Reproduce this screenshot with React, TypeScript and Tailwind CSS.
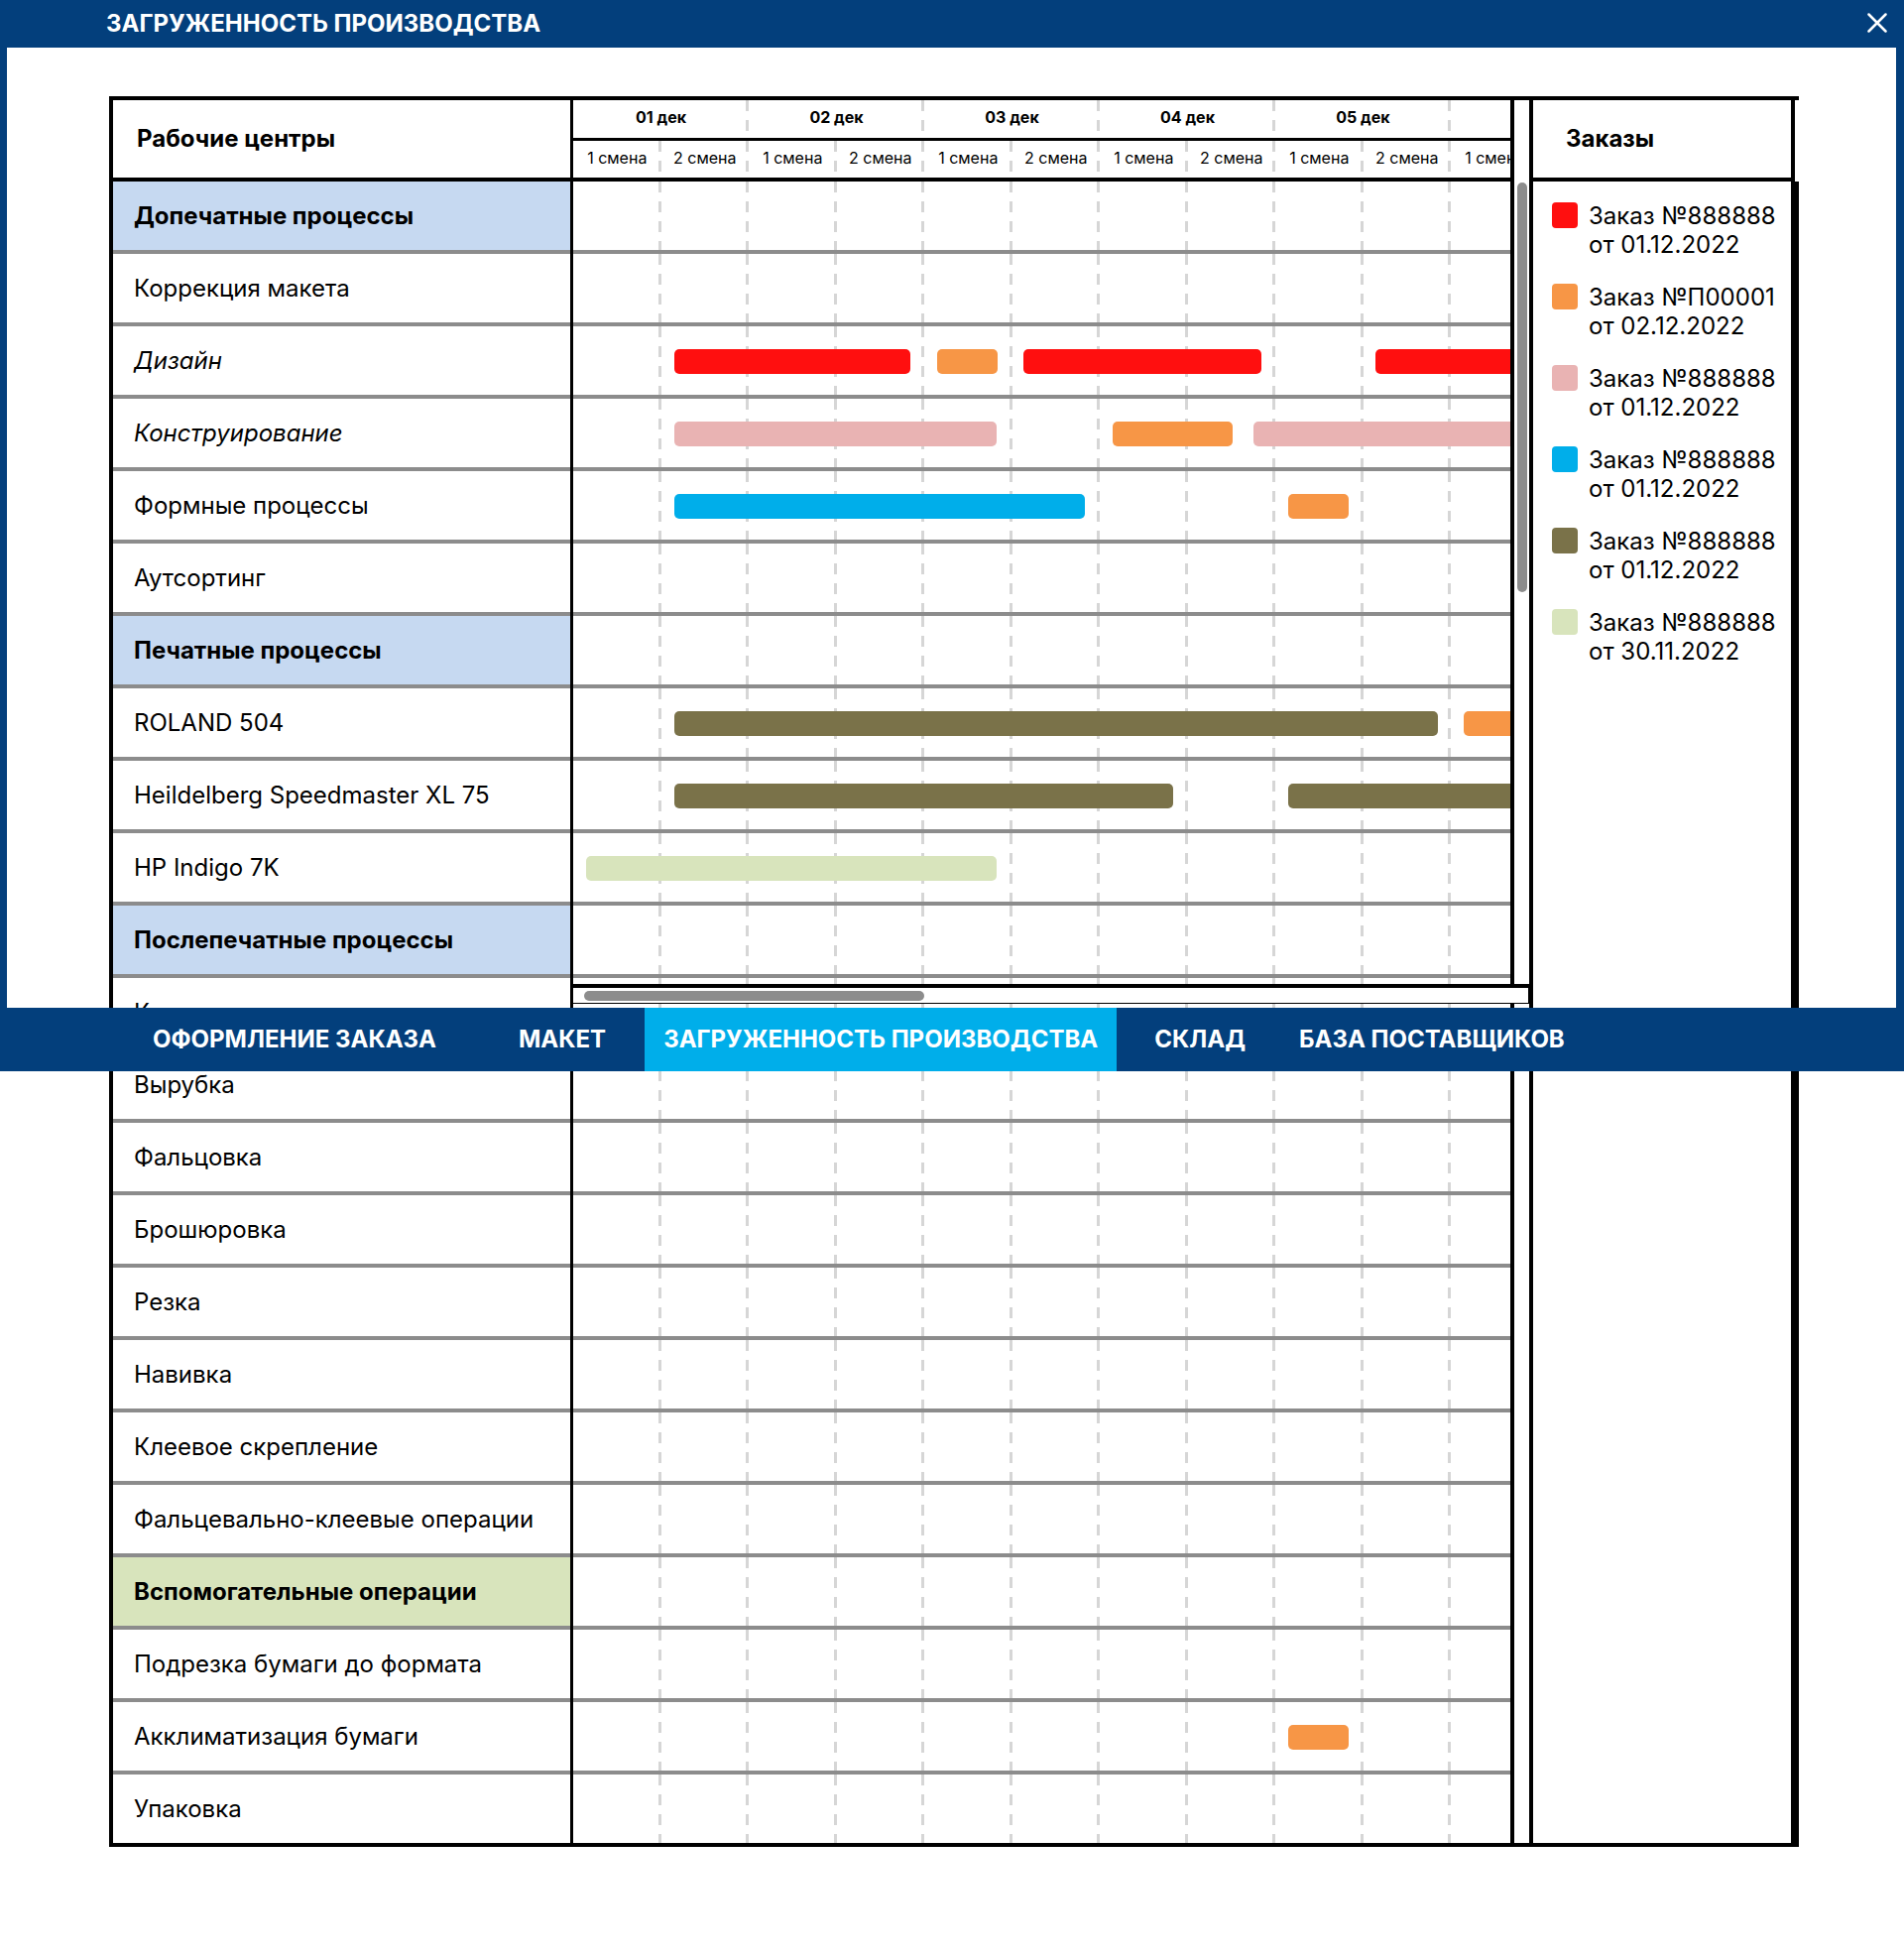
import React from 'react';

type Bar = { x: number; w: number; color: string };
type Row = { name: string; group?: 'blue' | 'green'; italic?: boolean; bars?: Bar[] };

const RED = 'bg-[#ff0f0f]';
const ORANGE = 'bg-[#f79646]';
const PINK = 'bg-[#e9b3b3]';
const BLUE = 'bg-[#00aeea]';
const OLIVE = 'bg-[#7a7249]';
const LIME = 'bg-[#d8e4bc]';

const rows: Row[] = [
  { name: 'Допечатные процессы', group: 'blue' },
  { name: 'Коррекция макета' },
  {
    name: 'Дизайн',
    italic: true,
    bars: [
      { x: 102, w: 238, color: RED },
      { x: 367, w: 61, color: ORANGE },
      { x: 454, w: 240, color: RED },
      { x: 809, w: 220, color: RED },
    ],
  },
  {
    name: 'Конструирование',
    italic: true,
    bars: [
      { x: 102, w: 325, color: PINK },
      { x: 544, w: 121, color: ORANGE },
      { x: 686, w: 320, color: PINK },
    ],
  },
  {
    name: 'Формные процессы',
    bars: [
      { x: 102, w: 414, color: BLUE },
      { x: 721, w: 61, color: ORANGE },
    ],
  },
  { name: 'Аутсортинг' },
  { name: 'Печатные процессы', group: 'blue' },
  {
    name: 'ROLAND 504',
    bars: [
      { x: 102, w: 770, color: OLIVE },
      { x: 898, w: 120, color: ORANGE },
    ],
  },
  {
    name: 'Heildelberg Speedmaster XL 75',
    bars: [
      { x: 102, w: 503, color: OLIVE },
      { x: 721, w: 300, color: OLIVE },
    ],
  },
  { name: 'HP Indigo 7K', bars: [{ x: 13, w: 414, color: LIME }] },
  { name: 'Послепечатные процессы', group: 'blue' },
  { name: 'Кашировка' },
  { name: 'Вырубка' },
  { name: 'Фальцовка' },
  { name: 'Брошюровка' },
  { name: 'Резка' },
  { name: 'Навивка' },
  { name: 'Клеевое скрепление' },
  { name: 'Фальцевально-клеевые операции' },
  { name: 'Вспомогательные операции', group: 'green' },
  { name: 'Подрезка бумаги до формата' },
  { name: 'Акклиматизация бумаги', bars: [{ x: 721, w: 61, color: ORANGE }] },
  { name: 'Упаковка' },
];

// the sixth day only starts inside the visible area, so it has no label
const days = ['01 дек', '02 дек', '03 дек', '04 дек', '05 дек', ''];
const shifts = Array.from({ length: 11 }, (_, i) => (i % 2 === 0 ? '1 смена' : '2 смена'));

const orders = [
  { color: 'bg-[#ff0f0f]', no: '№888888', date: '01.12.2022' },
  { color: 'bg-[#f79646]', no: '№П00001', date: '02.12.2022' },
  { color: 'bg-[#e9b3b3]', no: '№888888', date: '01.12.2022' },
  { color: 'bg-[#00aeea]', no: '№888888', date: '01.12.2022' },
  { color: 'bg-[#7a7249]', no: '№888888', date: '01.12.2022' },
  { color: 'bg-[#d8e4bc]', no: '№888888', date: '30.11.2022' },
];

const tabs = [
  { label: 'ОФОРМЛЕНИЕ ЗАКАЗА', cls: '' },
  { label: 'МАКЕТ', cls: 'ml-[45px]' },
  { label: 'ЗАГРУЖЕННОСТЬ ПРОИЗВОДСТВА', cls: 'ml-[20px] bg-[#00aeea]' },
  { label: 'СКЛАД', cls: 'ml-[19px]' },
  { label: 'БАЗА ПОСТАВЩИКОВ', cls: 'ml-[16px]' },
];

// dashed vertical line drawn on the right edge of a cell
const dash =
  'bg-[image:repeating-linear-gradient(to_bottom,#d6d6d6_0px,#d6d6d6_11px,transparent_11px,transparent_20px)] bg-[length:3px_100%] bg-right bg-no-repeat';

const GridCells = () => (
  <div className="flex h-full">
    {shifts.map((_, i) => (
      <div key={i} className={`w-[88.5px] shrink-0 h-full ${dash}`} />
    ))}
  </div>
);

export default function App() {
  return (
    <div className="relative w-[1920px] h-[1975px] bg-white font-['Inter',sans-serif] text-black overflow-hidden">
      {/* Table */}
      <div className="pt-[97px] pl-[110px]">
        <div className="flex w-[1704px] border-y-4 border-l-4 border-black">
          {/* Work centers column */}
          <div className="w-[464px] shrink-0 border-r-[3px] border-black">
            <div className="h-[82px] border-b-4 border-black flex items-center pl-[24px]">
              <span className="text-[24px] font-bold">Рабочие центры</span>
            </div>
            {rows.map((r, i) => (
              <div
                key={i}
                className={`flex items-center pl-[21px] ${i === rows.length - 1 ? 'h-[69px]' : 'h-[73px] border-b-4 border-[#8c8c8c]'} ${
                  r.group === 'blue' ? 'bg-[#c6d9f1]' : r.group === 'green' ? 'bg-[#d8e4bc]' : ''
                }`}
              >
                <span className={`text-[24px] whitespace-nowrap ${r.group ? 'font-bold' : ''} ${r.italic ? 'italic' : ''}`}>{r.name}</span>
              </div>
            ))}
          </div>

          {/* Gantt */}
          <div className="w-[945px] shrink-0 overflow-hidden">
            <div className="h-[82px] border-b-4 border-black flex flex-col">
              <div className="h-[38px] flex">
                {days.map((d, i) => (
                  <div key={i} className={`w-[177px] shrink-0 flex items-center justify-center pb-[4px] text-[16px] font-bold ${dash}`}>
                    {d}
                  </div>
                ))}
              </div>
              <div className="h-[3px] bg-black" />
              <div className="h-[37px] flex">
                {shifts.map((s, i) => (
                  <div key={i} className={`w-[88.5px] shrink-0 flex items-center justify-center pb-[4px] text-[16px] whitespace-nowrap overflow-hidden ${dash}`}>
                    {s}
                  </div>
                ))}
              </div>
            </div>
            {rows.map((r, i) => (
              <div
                key={i}
                className={`relative ${i === rows.length - 1 ? 'h-[69px]' : 'h-[73px] border-b-4 border-[#8c8c8c]'}`}
              >
                <GridCells />
                {r.bars?.map((b, j) => (
                  <div
                    key={j}
                    className={`absolute top-[23px] h-[25px] rounded-[5px] ${b.color}`}
                    style={{ left: b.x, width: b.w }}
                  />
                ))}
              </div>
            ))}
          </div>

          <div className="w-[4px] shrink-0 bg-black" />
          {/* vertical scroll track */}
          <div className="w-[15px] shrink-0 pl-[3px] pt-[83px]">
            <div className="w-[10px] h-[413px] rounded-full bg-[#8c8c8c]" />
          </div>
          <div className="w-[4px] shrink-0 bg-black" />

          {/* Orders legend */}
          <div className="flex-1 flex flex-col">
            <div className="h-[82px] mr-[4px] border-b-4 border-r-4 border-black flex items-center pl-[33px]">
              <span className="text-[24px] font-bold">Заказы</span>
            </div>
            <div className="flex-1 border-r-[8px] border-black pt-[20px] pl-[19px] flex flex-col gap-[24px]">
              {orders.map((o, i) => (
                <div key={i} className="flex items-start gap-[11px]">
                  <div className={`w-[26px] h-[26px] rounded-[4px] mt-[1px] shrink-0 ${o.color}`} />
                  <div className="text-[24px] leading-[29px] whitespace-nowrap">
                    <div>Заказ {o.no}</div>
                    <div>от {o.date}</div>
                  </div>
                </div>
              ))}
            </div>
          </div>
        </div>
      </div>

      {/* Horizontal scrollbar pinned above the nav */}
      <div className="absolute left-[578px] top-[992px] w-[964px] h-[20px] bg-white border-t-4 border-b border-r border-black">
        <div className="ml-[11px] mt-[3px] w-[343px] h-[10px] rounded-full bg-[#8c8c8c]" />
      </div>

      {/* Window frame */}
      <div className="absolute top-0 left-0 w-full h-[48px] bg-[#033f7c] flex items-center pl-[107px]">
        <span className="text-white text-[24px] font-bold">ЗАГРУЖЕННОСТЬ ПРОИЗВОДСТВА</span>
        <svg className="absolute left-[1883px] top-[13px]" width="20" height="20" viewBox="0 0 20 20">
          <path d="M1.5 1.5 L18.5 18.5 M18.5 1.5 L1.5 18.5" stroke="white" strokeWidth="2.5" strokeLinecap="round" />
        </svg>
      </div>
      <div className="absolute top-[48px] left-0 w-[7px] h-[968px] bg-[#033f7c]" />
      <div className="absolute top-[48px] right-0 w-[8px] h-[968px] bg-[#033f7c]" />

      {/* Bottom navigation */}
      <div className="absolute top-[1016px] left-0 w-full h-[64px] bg-[#033f7c] flex items-stretch pl-[135px]">
        {tabs.map((t) => (
          <div key={t.label} className={`flex items-center px-[19px] text-white text-[24px] font-bold ${t.cls}`}>
            {t.label}
          </div>
        ))}
      </div>
    </div>
  );
}
